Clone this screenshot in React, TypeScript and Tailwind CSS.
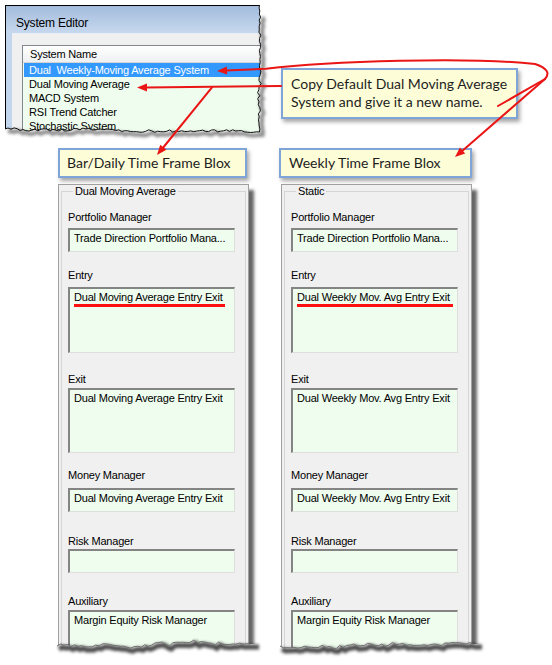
import React from "react";

type Pt = [number, number];

// small deterministic random so the torn edges look the same every run
function rng(seed: number) {
  let s = seed;
  return () => {
    s = (s * 9301 + 49297) % 233280;
    return s / 233280;
  };
}

function tear(x0: number, y0: number, x1: number, y1: number, amp: number, step: number, seed: number): Pt[] {
  const r = rng(seed);
  const dx = x1 - x0;
  const dy = y1 - y0;
  const len = Math.hypot(dx, dy);
  const nx = -dy / len;
  const ny = dx / len;
  const n = Math.round(len / step);
  const pts: Pt[] = [];
  let wave = 0;
  for (let i = 0; i <= n; i++) {
    const t = i / n;
    wave += (r() - 0.5) * amp * 0.7;
    wave *= 0.85;
    const off = i === 0 || i === n ? 0 : wave + (r() - 0.5) * amp;
    pts.push([x0 + dx * t + nx * off, y0 + dy * t + ny * off]);
  }
  return pts;
}

const str = (pts: Pt[], dx = 0, dy = 0) =>
  pts.map(([x, y]) => `${(x + dx).toFixed(1)},${(y + dy).toFixed(1)}`).join(" ");

function head(x1: number, y1: number, x2: number, y2: number) {
  const a = Math.atan2(y2 - y1, x2 - x1);
  const L = 10;
  const W = 4;
  const bx = x2 - L * Math.cos(a);
  const by = y2 - L * Math.sin(a);
  const px = -Math.sin(a) * W;
  const py = Math.cos(a) * W;
  return `${x2},${y2} ${bx + px},${by + py} ${bx - px},${by - py}`;
}

const winRight = tear(259.5, 5, 259.5, 132, 2.2, 3, 3);
const winBottom = tear(259.5, 132, 5, 129, 2.2, 3, 9);
const winEdge: Pt[] = [...winRight, ...winBottom.slice(1)];

const panelTear = (l: number, r: number, seed: number) => tear(l - 1, 646, r + 1, 644, 3, 3.5, seed);
const leftTear = panelTear(58, 249, 21);
const rightTear = panelTear(281, 472, 37);

const panelMask = (pts: Pt[], l: number, r: number) =>
  `M${l - 4},646 L${str(pts)} L${r + 14},644 L${r + 14},670 L${l - 4},670 Z`;

type Field = {
  label: string;
  value: string;
  lm: string;
  bm: string;
  h: string;
  underline?: string;
};

const leftFields: Field[] = [
  { label: "Portfolio Manager", value: "Trade Direction Portfolio Mana...", lm: "mt-[13px]", bm: "mt-[4px]", h: "h-[24px]" },
  { label: "Entry", value: "Dual Moving Average Entry Exit", lm: "mt-[17px]", bm: "mt-[5px]", h: "h-[66px]", underline: "w-[151px]" },
  { label: "Exit", value: "Dual Moving Average Entry Exit", lm: "mt-[20px]", bm: "mt-[2px]", h: "h-[65px]" },
  { label: "Money Manager", value: "Dual Moving Average Entry Exit", lm: "mt-[16px]", bm: "mt-[6px]", h: "h-[24px]" },
  { label: "Risk Manager", value: "", lm: "mt-[23px]", bm: "mt-[1px]", h: "h-[24px]" },
  { label: "Auxiliary", value: "Margin Equity Risk Manager", lm: "mt-[22px]", bm: "mt-[2px]", h: "h-[60px]" },
];

const weekly = "Dual Weekly Mov. Avg Entry Exit";
const rightFields: Field[] = leftFields.map((f, i) => {
  if (i === 0 || i === 4 || i === 5) return f;
  return { ...f, value: weekly, underline: i === 1 ? "w-[156px]" : undefined };
});

const systems = ["Dual  Weekly-Moving Average System", "Dual Moving Average", "MACD System", "RSI Trend Catcher", "Stochastic System"];

function SystemEditor() {
  return (
    <div className="ml-[5px] mt-[5px] flex h-[135px] w-[261px] flex-col border-l border-t border-black bg-[#c3d6ed]">
      <div className="h-[27px] bg-gradient-to-b from-[#a3bcdc] to-[#c6d8ee] pl-[10px] pt-[10px] text-[12px] leading-[14px] tracking-[-0.2px]">
        System Editor
      </div>
      <div className="ml-[6px] flex-1 border-t border-[#e8eef6] bg-[#f0f0f0] pl-[10px] pt-[11px]">
        <div className="h-full border border-[#828790] bg-[#eefdee]">
          <div className="h-[17px] border-b border-[#d5d5d5] bg-gradient-to-b from-white to-[#eff0f2] pl-[7px] leading-[17px] tracking-[-0.2px]">
            System Name
          </div>
          {systems.map((s, i) => (
            <div
              key={s}
              className={
                i === 0
                  ? "ml-[1px] h-[14px] whitespace-pre bg-[#3399ff] pl-[5px] leading-[14px] tracking-[-0.2px] text-white"
                  : "ml-[1px] h-[14px] whitespace-pre pl-[5px] leading-[14px] tracking-[-0.2px]"
              }
            >
              {s}
            </div>
          ))}
        </div>
      </div>
    </div>
  );
}

function Panel({ title, fields }: { title: string; fields: Field[] }) {
  return (
    <div className="h-[481px] w-[191px] border border-[#a0a0a0] bg-[#f0f0f0] shadow-[5px_6px_3px_rgba(0,0,0,0.6)]">
      <fieldset className="mx-[2px] h-[470px] border border-[#d5d5d5] pl-[6px]">
        <legend className="ml-[5px] px-[2px] leading-[13px] tracking-[-0.2px]">{title}</legend>
        {fields.map((f) => (
          <div key={f.label}>
            <div className={`${f.lm} h-[13px] leading-[13px] tracking-[-0.2px]`}>{f.label}</div>
            <div
              className={`${f.bm} ${f.h} w-[167px] overflow-hidden whitespace-nowrap border-b border-l-2 border-r border-t-2 border-b-[#dedede] border-l-[#848484] border-r-[#dedede] border-t-[#848484] bg-[#eefdee] pl-[4px] pt-[2px] leading-[13px] tracking-[-0.2px]`}
            >
              {f.value}
              {f.underline && <div className={`${f.underline} h-[3px] bg-[#ff1010]`} />}
            </div>
          </div>
        ))}
      </fieldset>
    </div>
  );
}

const callout =
  "border-2 border-[#7fa5d8] bg-[#fdfdd7] font-['Lato',sans-serif] text-[14px] leading-[18px] text-[#1e1e1e] shadow-[2px_3px_4px_rgba(0,0,0,0.35)]";

export default function App() {
  return (
    <div className="relative h-[665px] w-[552px] overflow-hidden bg-white font-['Liberation_Sans',Arial,sans-serif] text-[11px] text-black">
      <div className="flex items-start">
        <SystemEditor />
        <div className={`${callout} ml-[15px] mt-[68px] h-[51px] w-[237px] pl-[8px] pt-[5px]`}>
          <div>Copy Default Dual Moving Average</div>
          <div>System and give it a new name.</div>
        </div>
      </div>

      <div className="ml-[58px] mt-[8px] flex">
        <div className={`${callout} h-[30px] w-[189px] pl-[7px] pt-[4px]`}>Bar/Daily Time Frame Blox</div>
        <div className={`${callout} ml-[32px] h-[30px] w-[193px] pl-[8px] pt-[4px]`}>Weekly Time Frame Blox</div>
      </div>

      <div className="ml-[58px] mt-[6px] flex">
        <Panel title="Dual Moving Average" fields={leftFields} />
        <div className="ml-[32px]">
          <Panel title="Static" fields={rightFields} />
        </div>
      </div>

      {/* torn edges, shadows and the red annotation arrows */}
      <svg className="pointer-events-none absolute left-0 top-0" width="552" height="665" viewBox="0 0 552 665">
        <defs>
          <filter id="soft" filterUnits="userSpaceOnUse" x="0" y="0" width="552" height="665">
            <feGaussianBlur stdDeviation="1.6" />
          </filter>
        </defs>

        <path d={`M0,0 H276 V146 H0 Z M5,5 L${str(winEdge)} L5,5 Z`} fill="white" fillRule="evenodd" />
        <polyline points={str(winEdge.slice(3), 3, 3)} fill="none" stroke="rgba(0,0,0,0.45)" strokeWidth="4" filter="url(#soft)" />
        <polyline points={str(winEdge)} fill="none" stroke="#111" strokeWidth="1" />

        <path d={panelMask(leftTear, 58, 249)} fill="white" />
        <path d={panelMask(rightTear, 281, 472)} fill="white" />
        <polyline points={str([...leftTear, [257, 644]], 2, 3)} fill="none" stroke="rgba(0,0,0,0.7)" strokeWidth="5" filter="url(#soft)" />
        <polyline points={str([...rightTear, [480, 644]], 2, 3)} fill="none" stroke="rgba(0,0,0,0.7)" strokeWidth="5" filter="url(#soft)" />
        <polyline points={str(leftTear)} fill="none" stroke="#707070" strokeWidth="1" />
        <polyline points={str(rightTear)} fill="none" stroke="#707070" strokeWidth="1" />

        <g stroke="#ea1515" strokeWidth="2" fill="none" strokeLinecap="round" strokeLinejoin="round">
          <path d="M226,70.6 L266,68.8 C330,61 470,57 535,64 Q553,70 545,79 L498,106" />
          <path d="M545,79 L461,152" />
          <path d="M281,86 L146,87.4" />
          <path d="M212,87.4 L162,149" />
        </g>
        <g fill="#ea1515">
          <polygon points={head(266, 68.8, 217, 71)} />
          <polygon points={head(545, 79, 455, 157)} />
          <polygon points={head(281, 86, 137, 87.5)} />
          <polygon points={head(212, 87.4, 157, 155)} />
        </g>
      </svg>
    </div>
  );
}
